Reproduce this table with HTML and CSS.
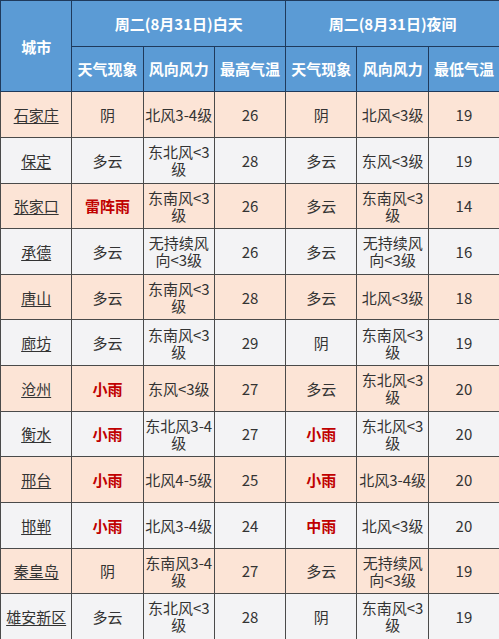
FILE: index.html
```html
<!DOCTYPE html>
<html lang="zh">
<head>
<meta charset="utf-8">
<link rel="stylesheet" href="styles.css">
</head>
<body>
<table class="wx">
  <colgroup>
    <col><col><col><col><col><col><col>
  </colgroup>
  <thead>
    <tr class="h1">
      <th rowspan="2">城市</th>
      <th colspan="3">周二(8月31日)白天</th>
      <th colspan="3">周二(8月31日)夜间</th>
    </tr>
    <tr class="h2">
      <th>天气现象</th><th>风向风力</th><th>最高气温</th>
      <th>天气现象</th><th>风向风力</th><th>最低气温</th>
    </tr>
  </thead>
  <tbody>
    <tr class="odd"><td class="city">石家庄</td><td>阴</td><td>北风3-4级</td><td>26</td><td>阴</td><td>北风&lt;3级</td><td>19</td></tr>
    <tr class="even"><td class="city">保定</td><td>多云</td><td>东北风&lt;3级</td><td>28</td><td>多云</td><td>东风&lt;3级</td><td>19</td></tr>
    <tr class="odd"><td class="city">张家口</td><td class="red">雷阵雨</td><td>东南风&lt;3级</td><td>26</td><td>多云</td><td>东南风&lt;3级</td><td>14</td></tr>
    <tr class="even"><td class="city">承德</td><td>多云</td><td>无持续风向&lt;3级</td><td>26</td><td>多云</td><td>无持续风向&lt;3级</td><td>16</td></tr>
    <tr class="odd"><td class="city">唐山</td><td>多云</td><td>东南风&lt;3级</td><td>28</td><td>多云</td><td>北风&lt;3级</td><td>18</td></tr>
    <tr class="even"><td class="city">廊坊</td><td>多云</td><td>东南风&lt;3级</td><td>29</td><td>阴</td><td>东南风&lt;3级</td><td>19</td></tr>
    <tr class="odd"><td class="city">沧州</td><td class="red">小雨</td><td>东风&lt;3级</td><td>27</td><td>多云</td><td>东北风&lt;3级</td><td>20</td></tr>
    <tr class="even"><td class="city">衡水</td><td class="red">小雨</td><td>东北风3-4级</td><td>27</td><td class="red">小雨</td><td>东北风&lt;3级</td><td>20</td></tr>
    <tr class="odd"><td class="city">邢台</td><td class="red">小雨</td><td>北风4-5级</td><td>25</td><td class="red">小雨</td><td>北风3-4级</td><td>20</td></tr>
    <tr class="even"><td class="city">邯郸</td><td class="red">小雨</td><td>北风3-4级</td><td>24</td><td class="red">中雨</td><td>北风&lt;3级</td><td>20</td></tr>
    <tr class="odd"><td class="city">秦皇岛</td><td>阴</td><td>东南风3-4级</td><td>27</td><td>多云</td><td>无持续风向&lt;3级</td><td>19</td></tr>
    <tr class="even"><td class="city">雄安新区</td><td>多云</td><td>东北风&lt;3级</td><td>28</td><td>阴</td><td>东南风&lt;3级</td><td>19</td></tr>
  </tbody>
</table>
</body>
</html>
```
FILE: styles.css
```css
html, body {
  margin: 0;
  padding: 0;
  background: #ffffff;
}
.wx {
  width: 499px;
  height: 639px;
  border-collapse: collapse;
  table-layout: fixed;
  font-family: "Noto Sans CJK SC", "Noto Sans", sans-serif;
  font-size: 15px;
  line-height: 17px;
  color: #333333;
}
.wx col {
  width: 71.3px;
}
.wx tr {
  height: 45.64px;
}
.wx th {
  background: #5b9bd5;
  color: #ffffff;
  font-weight: bold;
  border: 1px solid #1f3a5c;
  text-align: center;
  vertical-align: middle;
  padding: 0;
}
.wx td {
  border: 1px solid #4a4a4a;
  text-align: center;
  vertical-align: middle;
  padding: 0;
}
.wx tr.odd td {
  background: #fce4d6;
}
.wx tr.even td {
  background: #f3f3f5;
}
.wx td.city {
  text-decoration: underline;
  text-underline-offset: 2px;
  color: #333333;
}
.wx td.red {
  color: #c00000;
  font-weight: bold;
}
```
